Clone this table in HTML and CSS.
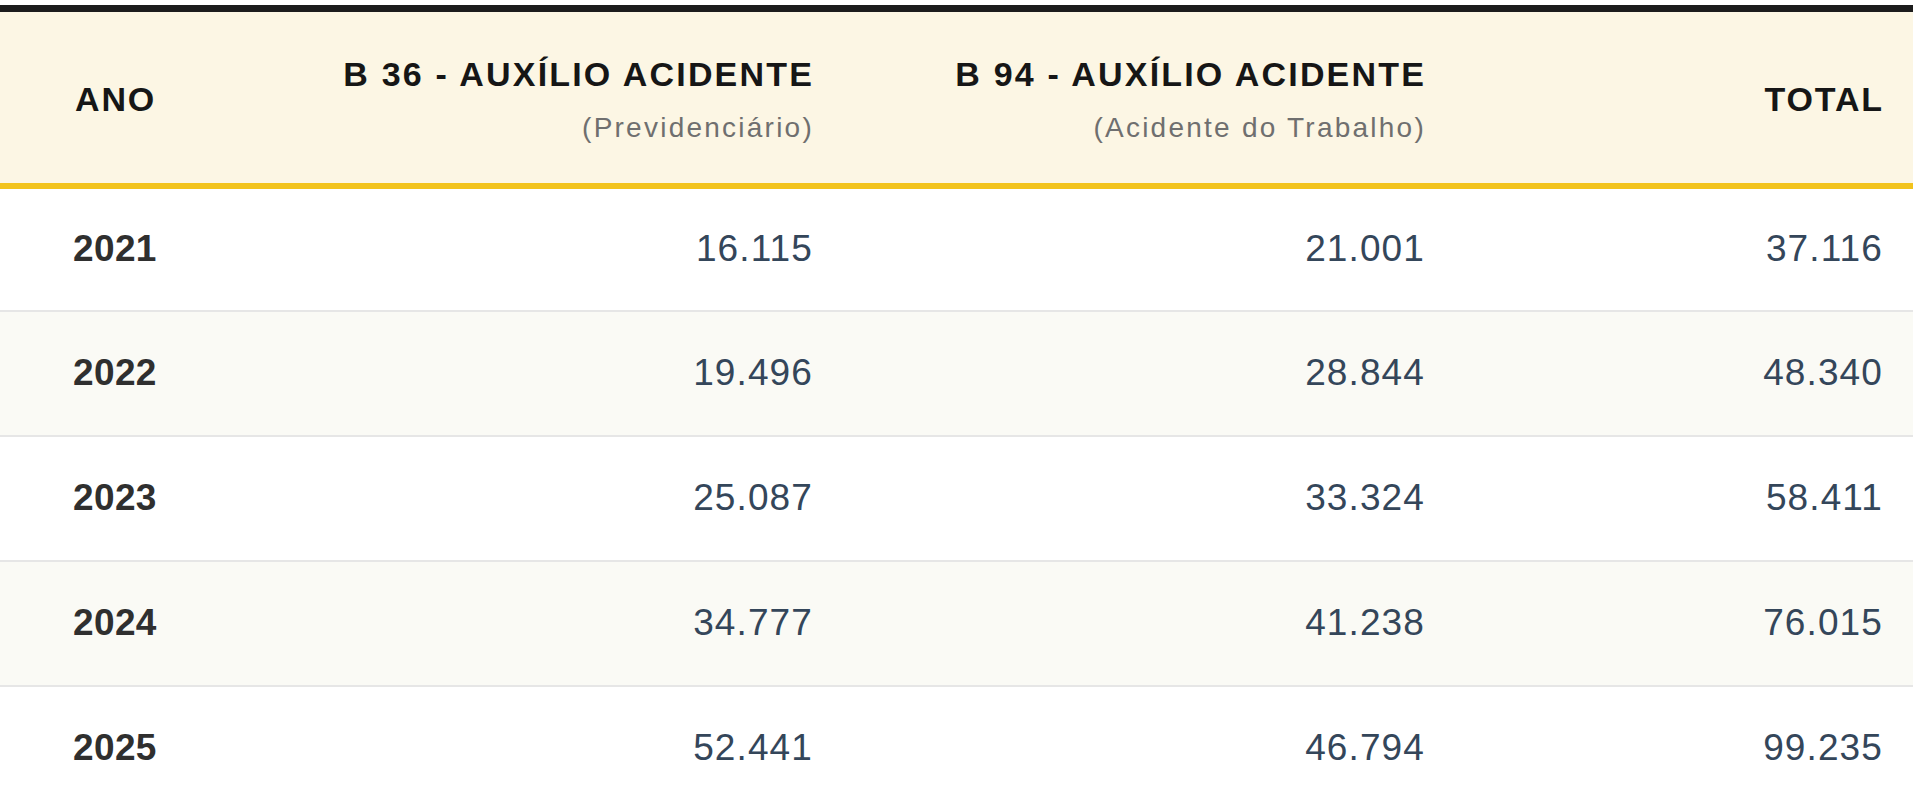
FILE: index.html
```html
<!DOCTYPE html>
<html lang="pt-BR">
<head>
<meta charset="utf-8">
<title>Auxílio Acidente</title>
<link rel="stylesheet" href="styles.css">
</head>
<body>
<table class="data-table">
  <colgroup>
    <col class="col-year">
    <col class="col-b36">
    <col class="col-b94">
    <col class="col-total">
  </colgroup>
  <thead>
    <tr>
      <th class="th-year">ANO</th>
      <th class="th-num"><span class="title">B 36 - AUXÍLIO ACIDENTE</span><span class="sub">(Previdenciário)</span></th>
      <th class="th-num"><span class="title">B 94 - AUXÍLIO ACIDENTE</span><span class="sub">(Acidente do Trabalho)</span></th>
      <th class="th-num">TOTAL</th>
    </tr>
  </thead>
  <tbody>
    <tr><td class="year">2021</td><td class="num">16.115</td><td class="num">21.001</td><td class="num">37.116</td></tr>
    <tr class="alt"><td class="year">2022</td><td class="num">19.496</td><td class="num">28.844</td><td class="num">48.340</td></tr>
    <tr><td class="year">2023</td><td class="num">25.087</td><td class="num">33.324</td><td class="num">58.411</td></tr>
    <tr class="alt"><td class="year">2024</td><td class="num">34.777</td><td class="num">41.238</td><td class="num">76.015</td></tr>
    <tr><td class="year">2025</td><td class="num">52.441</td><td class="num">46.794</td><td class="num">99.235</td></tr>
  </tbody>
</table>
</body>
</html>
```
FILE: styles.css
```css
html, body {
  margin: 0;
  padding: 0;
  background: #ffffff;
}

body {
  font-family: "Liberation Sans", Arial, Helvetica, sans-serif;
  padding-top: 5px;
  overflow: hidden;
}

.data-table {
  width: 1913px;
  border-collapse: collapse;
  table-layout: fixed;
  border-top: 7px solid #1c1c1c;
}

.col-year { width: 231px; }
.col-b36 { width: 612px; }
.col-b94 { width: 612px; }
.col-total { width: 458px; }

thead tr {
  background: #fcf6e4;
  border-bottom: 6px solid #f2c31c;
}

th {
  height: 177px;
  box-sizing: border-box;
  padding: 5px 29px 0 0;
  font-size: 34px;
  font-weight: 700;
  letter-spacing: 0.055em;
  color: #161616;
  vertical-align: middle;
}

.th-year {
  text-align: left;
  padding-left: 75px;
}

.th-num {
  text-align: right;
}

.title {
  display: block;
  letter-spacing: 0.064em;
}

.sub {
  display: block;
  margin-top: 18px;
  font-size: 28px;
  font-weight: 400;
  letter-spacing: 0.08em;
  color: #6f6f6f;
}

tbody tr {
  border-bottom: 2px solid #e6e6e6;
  background: #ffffff;
}

tbody tr.alt {
  background: #fafaf5;
}

td {
  height: 125px;
  box-sizing: border-box;
  padding: 0 30px 0 0;
  font-size: 37px;
  vertical-align: middle;
}

.year {
  text-align: left;
  padding-left: 73px;
  font-weight: 700;
  letter-spacing: 0.01em;
  color: #2f2f2f;
}

.num {
  text-align: right;
  letter-spacing: 0.03em;
  color: #34465a;
}
```
